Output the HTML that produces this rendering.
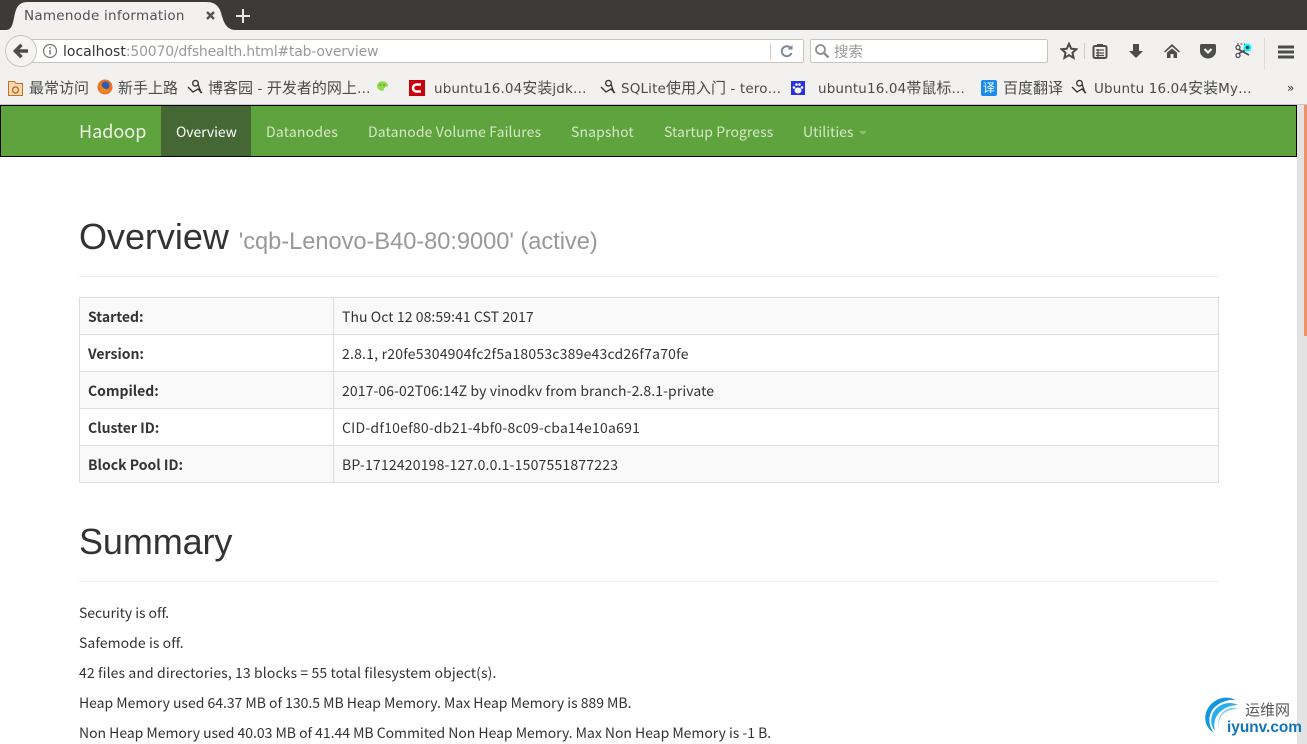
<!DOCTYPE html>
<html><head><meta charset="utf-8"><style>
html,body{margin:0;padding:0;width:1307px;height:744px;overflow:hidden;background:#fff}
body{position:relative;font-family:"Noto Sans CJK SC","Liberation Sans",sans-serif;color:#333;font-size:14px}
.a{position:absolute;white-space:nowrap}
.ui{font-family:"DejaVu Sans","Noto Sans CJK SC",sans-serif;color:#4c4c4c;font-size:13.5px;line-height:20px}
.bm{font-family:"DejaVu Sans","Noto Sans CJK SC",sans-serif;color:#4a4a4a;font-size:13.5px;line-height:20px;top:78px;letter-spacing:.15px}
.bm span{font-family:"Noto Sans CJK SC",sans-serif;font-size:15px;letter-spacing:0}
.nav{top:107px;height:50px;line-height:50px;font-size:14px;color:#d6e8c4}
.row{position:absolute;left:79px;width:1140px;height:37px;box-sizing:border-box;border:1px solid #ddd;border-bottom:0;line-height:38px;font-size:14px}
.row b{position:absolute;left:8px;font-weight:700}
.row i{position:absolute;left:262px;font-style:normal}
.row:before{content:"";position:absolute;left:253px;top:0;bottom:0;width:1px;background:#ddd}
.odd{background:#f9f9f9}
.p{left:79px;font-size:14px;line-height:20px}
.h{font-family:"Liberation Sans",sans-serif;left:79px;color:#333}
</style></head><body>
<div class="a" style="left:0;top:0;width:1307px;height:30px;background:#3c3b37"></div>
<svg class="a" style="left:0;top:0" width="240" height="31"><path d="M6 30C14 30 13 18 16 10 18 4 22 2 28 2H206C213 2 217 4 220 10 223 18 224 30 236 30Z" fill="#f2f1f0"/><path d="M207 12l7 7M214 12l-7 7" stroke="#555" stroke-width="2.400"/></svg>
<svg class="a" style="left:236px;top:8px" width="16" height="16"><path d="M7 1v14M0 8h14" stroke="#e8e8e8" stroke-width="2"/></svg>
<div class="a ui" style="left:24px;top:6px;font-size:13.5px;letter-spacing:.25px;color:#4f5258">Namenode information</div>
<div class="a" style="left:0;top:30px;width:1307px;height:75px;background:#f2f1f0;border-bottom:1px solid #c9c7c4;box-sizing:border-box"></div>

<div class="a" style="left:30px;top:39px;width:772px;height:22px;background:#fff;border:1px solid #c8c5c1;border-radius:2px"></div>
<div class="a" style="left:5px;top:35px;width:30px;height:30px;border-radius:50%;background:#f5f4f3;border:1px solid #c8c5c1"></div>
<svg class="a" style="left:12px;top:42px" width="18" height="18"><path d="M16 9H5M9.500 2.800L3.300 9l6.200 6.200" fill="none" stroke="#4d4d4d" stroke-width="3.400"/></svg>
<svg class="a" style="left:42px;top:43px" width="16" height="16"><circle cx="8" cy="8" r="6.500" fill="none" stroke="#777" stroke-width="1.200"/><path d="M8 7v4.500M8 4v1.600" stroke="#777" stroke-width="1.500"/></svg>
<div class="a ui" style="left:63px;top:42px;font-size:14px;color:#999;letter-spacing:-.2px"><span style="color:#333;letter-spacing:0">localhost</span>:50070/dfshealth.html#tab-overview</div>
<div class="a" style="left:770px;top:43px;width:1px;height:16px;background:#ccc"></div>
<svg class="a" style="left:780px;top:44px" width="14" height="14"><path d="M11 4.500A5 5 0 1 0 11.500 9" fill="none" stroke="#7c8894" stroke-width="2"/><path d="M7.500 5.500h5V1z" fill="#7c8894"/></svg>
<div class="a" style="left:810px;top:39px;width:236px;height:22px;background:#fff;border:1px solid #c8c5c1;border-radius:2px"></div>
<svg class="a" style="left:814px;top:43px" width="16" height="16"><circle cx="6.500" cy="6.500" r="4.500" fill="none" stroke="#8a8f94" stroke-width="1.800"/><path d="M10 10l4.500 4.500" stroke="#8a8f94" stroke-width="2.400"/></svg>
<div class="a" style="left:834px;top:42px;font-size:14.500px;line-height:20px;color:#999">搜索</div>

<svg class="a" style="left:1060px;top:42px" width="18" height="18"><path d="M9 1.800l2.200 4.900 5.200.5-3.900 3.500 1.100 5.200L9 13.200l-4.600 2.700 1.100-5.200L1.600 7.200l5.200-.5z" fill="none" stroke="#4c4c4c" stroke-width="2"/></svg>
<div class="a" style="left:1084px;top:43px;width:1px;height:16px;background:#ccc"></div>
<svg class="a" style="left:1092px;top:43px" width="16" height="16"><rect x="1.500" y="3" width="13" height="12" rx="1.500" fill="none" stroke="#4c4c4c" stroke-width="2"/><rect x="5" y="1" width="6" height="3" fill="#4c4c4c"/><path d="M4 7h8M4 10h8M4 12.500h8M6 6v8" stroke="#4c4c4c" stroke-width="1.200"/></svg>
<svg class="a" style="left:1128px;top:43px" width="16" height="16"><path d="M5 1h6v7h4l-7 7-7-7h4z" fill="#4c4c4c"/></svg>
<svg class="a" style="left:1164px;top:43px" width="16" height="16"><path d="M8 1L0 8.500l1 1L8 3.500l7 6 1-1z" fill="#4c4c4c"/><path d="M3 9.500L8 5.500l5 4V15H9.500v-4h-3v4H3z" fill="#4c4c4c"/></svg>
<svg class="a" style="left:1200px;top:44px" width="16" height="15"><path d="M1.500 0h13A1.500 1.500 0 0 1 16 1.500V7A8 7.500 0 0 1 0 7V1.500A1.500 1.500 0 0 1 1.500 0z" fill="#4c4c4c"/><path d="M4.500 5L8 8.500 11.500 5" fill="none" stroke="#f2f1f0" stroke-width="2.200"/></svg>
<svg class="a" style="left:1235px;top:43px" width="18" height="17"><path d="M1 5l13 7M1 12l13-7" stroke="#4c4c4c" stroke-width="1.600"/><circle cx="3" cy="4.500" r="2" fill="#fff" stroke="#4c4c4c" stroke-width="1.300"/><circle cx="3" cy="12.500" r="2" fill="#fff" stroke="#4c4c4c" stroke-width="1.300"/><path d="M2 1h8" stroke="#4c4c4c" stroke-dasharray="2 1.500"/><circle cx="12.500" cy="4.500" r="4" fill="#0ff"/><circle cx="12.500" cy="4.500" r="1.800" fill="#135"/></svg>
<div class="a" style="left:1264px;top:38px;width:1px;height:31px;background:#dcdad7"></div>
<svg class="a" style="left:1278px;top:45px" width="16" height="14"><path d="M0 2h16M0 7h16M0 12h16" stroke="#4c4c4c" stroke-width="3"/></svg>

<svg class="a" style="left:8px;top:80px" width="15" height="16"><path d="M.5 1.500h6l1.500 2h6.500v12H.5z" fill="#f3d9b8" stroke="#c8701e"/><circle cx="7.500" cy="10" r="3" fill="none" stroke="#c8701e" stroke-width="1.400"/></svg>
<div class="a bm" style="left:29px"><span>最常访问</span></div>
<svg class="a" style="left:97px;top:79px" width="16" height="16"><circle cx="8" cy="8" r="7.500" fill="#e8742a"/><circle cx="8.500" cy="6.500" r="4" fill="#2b5fa8"/><path d="M3 4c2 5 5 7 10 6-2 4-8 5-10 1z" fill="#f08a1d"/></svg>
<div class="a bm" style="left:118px"><span>新手上路</span></div>
<svg class="a" style="left:187px;top:79px" width="16" height="16"><path d="M1 8l5 5 5-3 4 4M8 1.500a2.800 2.800 0 1 1 0 5.500 2.800 2.800 0 0 1 0-5.500M11 5l3 9" fill="none" stroke="#333" stroke-width="1.300"/></svg>
<div class="a bm" style="left:208px"><span>博客园</span> - <span>开发者的网上</span>…</div>
<svg class="a" style="left:377px;top:81px" width="16" height="14"><ellipse cx="5.500" cy="5" rx="5.500" ry="4.800" fill="#8fd94a"/><ellipse cx="11" cy="9" rx="4.500" ry="3.800" fill="#f0f0ee"/><circle cx="3.500" cy="4" r=".9" fill="#4f9a20"/><circle cx="7" cy="4" r=".9" fill="#4f9a20"/></svg>
<div class="a" style="left:409px;top:80px;width:16px;height:16px;background:#c8000f"></div>
<svg class="a" style="left:409px;top:80px" width="16" height="16"><path d="M12 4.500H7.500a3.500 3.500 0 0 0 0 7H12" fill="none" stroke="#fff" stroke-width="2.500"/></svg>
<div class="a bm" style="left:434px">ubuntu16.04<span>安装</span>jdk…</div>
<svg class="a" style="left:600px;top:79px" width="16" height="16"><path d="M1 8l5 5 5-3 4 4M8 1.500a2.800 2.800 0 1 1 0 5.500 2.800 2.800 0 0 1 0-5.500M11 5l3 9" fill="none" stroke="#333" stroke-width="1.300"/></svg>
<div class="a bm" style="left:621px">SQLite<span>使用入门</span> - tero…</div>
<svg class="a" style="left:790px;top:80px" width="16" height="16"><rect x="1" y="1" width="14" height="14" fill="#2932e1"/><ellipse cx="8" cy="10.500" rx="3.500" ry="3" fill="#fff"/><circle cx="4" cy="7.500" r="1.300" fill="#fff"/><circle cx="12" cy="7.500" r="1.300" fill="#fff"/><circle cx="6.500" cy="4.500" r="1.300" fill="#fff"/><circle cx="9.500" cy="4.500" r="1.300" fill="#fff"/></svg>
<div class="a bm" style="left:818px">ubuntu16.04<span>帯鼠标</span>…</div>
<div class="a" style="left:981px;top:80px;width:16px;height:16px;background:#1a8cf0;border-radius:2px;color:#fff;font-size:12px;line-height:16px;text-align:center">译</div>
<div class="a bm" style="left:1003px"><span>百度翻译</span></div>
<svg class="a" style="left:1071px;top:79px" width="16" height="16"><path d="M1 8l5 5 5-3 4 4M8 1.500a2.800 2.800 0 1 1 0 5.500 2.800 2.800 0 0 1 0-5.500M11 5l3 9" fill="none" stroke="#333" stroke-width="1.300"/></svg>
<div class="a bm" style="left:1094px">Ubuntu 16.04<span>安装</span>My…</div>
<div class="a bm" style="left:1287px;font-size:12px;top:78px;color:#333">»</div>

<div class="a" style="left:0;top:105px;width:1297px;height:52px;box-sizing:border-box;background:#5fa33e;border:1px solid #000"></div>
<div class="a" style="left:161px;top:106px;width:90px;height:50px;background:#446733"></div>
<div class="a nav" style="left:79px;top:106px;font-size:18px;color:#eef5e6">Hadoop</div>
<div class="a nav" style="left:176px;color:#fff;letter-spacing:-.08px">Overview</div>
<div class="a nav" style="left:266px;letter-spacing:.2px">Datanodes</div>
<div class="a nav" style="left:368px;letter-spacing:.12px">Datanode Volume Failures</div>
<div class="a nav" style="left:571px;letter-spacing:.1px">Snapshot</div>
<div class="a nav" style="left:664px;letter-spacing:.05px">Startup Progress</div>
<div class="a nav" style="left:803px">Utilities</div>
<div class="a" style="left:859px;top:131px;width:0;height:0;border:4px solid transparent;border-top-color:#8fc06f;border-bottom:0"></div>

<div class="a h" style="top:215px;font-size:36px;line-height:44px;letter-spacing:-.03px">Overview <span style="font-size:23.65px;color:#999">'cqb-Lenovo-B40-80:9000' (active)</span></div>
<div class="a" style="left:79px;top:276px;width:1140px;height:1px;background:#eee"></div>

<div class="row odd" style="top:297px"><b>Started:</b><i style="letter-spacing:.07px">Thu Oct 12 08:59:41 CST 2017</i></div>
<div class="row" style="top:334px"><b>Version:</b><i style="letter-spacing:.21px">2.8.1, r20fe5304904fc2f5a18053c389e43cd26f7a70fe</i></div>
<div class="row odd" style="top:371px"><b>Compiled:</b><i style="letter-spacing:.09px">2017-06-02T06:14Z by vinodkv from branch-2.8.1-private</i></div>
<div class="row" style="top:408px"><b>Cluster ID:</b><i style="letter-spacing:.225px">CID-df10ef80-db21-4bf0-8c09-cba14e10a691</i></div>
<div class="row odd" style="top:445px;height:38px;border-bottom:1px solid #ddd"><b>Block Pool ID:</b><i style="letter-spacing:.19px">BP-1712420198-127.0.0.1-1507551877223</i></div>

<div class="a h" style="top:520px;font-size:36px;line-height:44px;letter-spacing:-.1px">Summary</div>
<div class="a" style="left:79px;top:581px;width:1140px;height:1px;background:#eee"></div>
<div class="a p" style="top:603px;letter-spacing:-.06px">Security is off.</div>
<div class="a p" style="top:633px;letter-spacing:.06px">Safemode is off.</div>
<div class="a p" style="top:663px;letter-spacing:.1px">42 files and directories, 13 blocks = 55 total filesystem object(s).</div>
<div class="a p" style="top:693px;letter-spacing:-.025px">Heap Memory used 64.37 MB of 130.5 MB Heap Memory. Max Heap Memory is 889 MB.</div>
<div class="a p" style="top:723px;letter-spacing:-.03px">Non Heap Memory used 40.03 MB of 41.44 MB Commited Non Heap Memory. Max Non Heap Memory is -1 B.</div>

<div class="a" style="left:1297px;top:105px;width:10px;height:639px;background:#e3e3e3"></div>
<div class="a" style="left:1304px;top:105px;width:3px;height:231px;background:#f0916a"></div>

<svg class="a" style="left:1200px;top:692px" width="50" height="48"><path d="M36 8C24 2 12 8 7 18 3 27 6 36 14 41 8 33 8 24 13 17 18 11 27 7 36 8z" fill="#1397dc"/><path d="M38 13C28 8 17 13 13 21c-3 7-2 13 2 18-2-8 0-15 6-20 5-4 11-6 17-6z" fill="#2aaee8"/><path d="M38 17c-8-3-15 1-18 7-2 4-2 8-1 11-1-8 3-14 9-16 3-1 6-2 10-2z" fill="#7fcdf0"/></svg>
<div class="a" style="left:1245px;top:700px;font-family:'Noto Sans CJK SC',sans-serif;font-size:15px;line-height:20px;color:#555">运维网</div>
<div class="a" style="left:1227px;top:719px;font-family:'Liberation Sans',sans-serif;font-size:15.4px;font-weight:700;line-height:18px;color:#1274b8">iyunv.com</div>
</body></html>
